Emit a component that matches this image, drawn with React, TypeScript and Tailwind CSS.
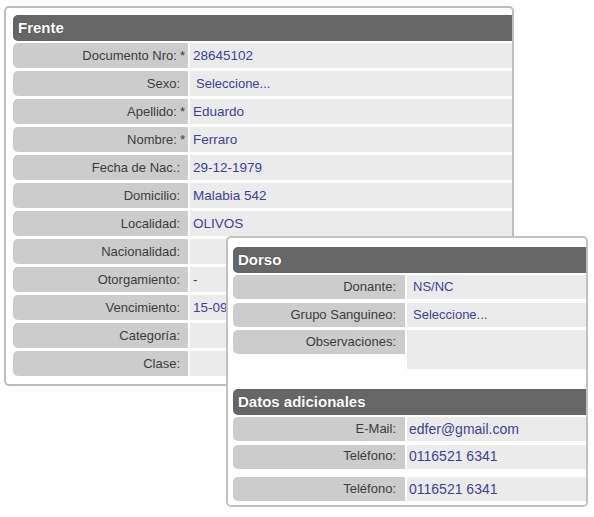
import React from 'react';

type Field = { label: string; value?: string; req?: boolean; select?: boolean };

const frente: Field[] = [
  { label: 'Documento Nro:', value: '28645102', req: true },
  { label: 'Sexo:', value: 'Seleccione...', select: true },
  { label: 'Apellido:', value: 'Eduardo', req: true },
  { label: 'Nombre:', value: 'Ferraro', req: true },
  { label: 'Fecha de Nac.:', value: '29-12-1979' },
  { label: 'Domicilio:', value: 'Malabia 542' },
  { label: 'Localidad:', value: 'OLIVOS' },
  { label: 'Nacionalidad:', value: '' },
  { label: 'Otorgamiento:', value: '-' },
  { label: 'Vencimiento:', value: '15-09-2019' },
  { label: 'Categoría:', value: '' },
  { label: 'Clase:', value: '' },
];

const Header: React.FC<{ title: string }> = ({ title }) => (
  <div className="h-[26px] bg-[#666666] rounded-l-[5px] pl-[5px] text-[15px] leading-[26px] font-bold text-white [text-shadow:0_0_1px_rgba(0,0,0,0.4)]">
    {title}
  </div>
);

const App: React.FC = () => {
  return (
    <div className="relative w-[594px] h-[517px] bg-white pt-[6px] pl-[4px] font-['Liberation_Sans',Arial,sans-serif] text-[13px]">
      {/* Frente */}
      <div className="w-[510px] h-[380px] border-2 border-[#bdbdbd] rounded-[5px] overflow-hidden bg-white pt-[7px] pl-[7px]">
        <div className="w-[520px]">
          <Header title="Frente" />
          <div className="mt-[2px] flex flex-col gap-[3px]">
            {frente.map((f) => (
              <div key={f.label} className="flex gap-[2px] h-[25px] leading-[25px]">
                <div className="w-[175px] shrink-0 bg-[#cccccc] rounded-l-[5px] text-right pr-[8px] text-[#3d3d3d]">
                  {f.label}
                  {f.req && <span className="ml-[3px] -mr-[5px]">*</span>}
                </div>
                <div className={`flex-1 bg-[#ebebeb] text-[#3f3f9e] ${f.select ? 'pl-[6px] text-[13px]' : 'pl-[3px] text-[13.5px]'}`}>
                  {f.value}
                </div>
              </div>
            ))}
          </div>
        </div>
      </div>

      {/* Dorso window, lies over Frente */}
      <div className="absolute left-[226px] top-[236px] w-[362px] h-[271px] border-2 border-[#c2c2c2] rounded-[5px] overflow-hidden bg-white pt-[9px] pl-[5px]">
        <div className="w-[370px]">
          <Header title="Dorso" />
          <div className="mt-[2px] flex gap-[2px] h-[24px] leading-[24px]">
            <div className="w-[172px] shrink-0 bg-[#cccccc] rounded-l-[5px] text-right pr-[9px] text-[#3d3d3d]">Donante:</div>
            <div className="flex-1 bg-[#ebebeb] pl-[6px] text-[#3f3f9e]">NS/NC</div>
          </div>
          <div className="mt-[4px] flex gap-[2px] h-[24px] leading-[24px]">
            <div className="w-[172px] shrink-0 bg-[#cccccc] rounded-l-[5px] text-right pr-[9px] text-[#3d3d3d]">Grupo Sanguineo:</div>
            <div className="flex-1 bg-[#ebebeb] pl-[6px] text-[#3f3f9e]">Seleccione...</div>
          </div>
          <div className="mt-[3px] flex items-start gap-[2px] leading-[24px]">
            <div className="w-[172px] h-[24px] shrink-0 bg-[#cccccc] rounded-l-[5px] text-right pr-[9px] text-[#3d3d3d]">Observaciones:</div>
            <div className="flex-1 h-[39px] bg-[#ebebeb]"></div>
          </div>

          <div className="mt-[20px]">
            <Header title="Datos adicionales" />
          </div>
          <div className="mt-[2px] flex gap-[2px] h-[24px] leading-[24px]">
            <div className="w-[172px] shrink-0 bg-[#cccccc] rounded-l-[5px] text-right pr-[9px] text-[#3d3d3d]">E-Mail:</div>
            <div className="flex-1 bg-[#ebebeb] pl-[2px] text-[#3f3f9e] text-[14px]">edfer@gmail.com</div>
          </div>
          <div className="mt-[4px] flex gap-[2px] h-[24px] leading-[22px]">
            <div className="w-[172px] shrink-0 bg-[#cccccc] rounded-l-[5px] text-right pr-[9px] text-[#3d3d3d]">Teléfono:</div>
            <div className="flex-1 bg-[#ebebeb] pl-[2px] text-[#3f3f9e] text-[14px]">0116521 6341</div>
          </div>
          <div className="mt-[8px] flex gap-[2px] h-[24px] leading-[24px]">
            <div className="w-[172px] shrink-0 bg-[#cccccc] rounded-l-[5px] text-right pr-[9px] text-[#3d3d3d]">Teléfono:</div>
            <div className="flex-1 bg-[#ebebeb] pl-[2px] text-[#3f3f9e] text-[14px]">0116521 6341</div>
          </div>
        </div>
      </div>
    </div>
  );
};

export default App;
